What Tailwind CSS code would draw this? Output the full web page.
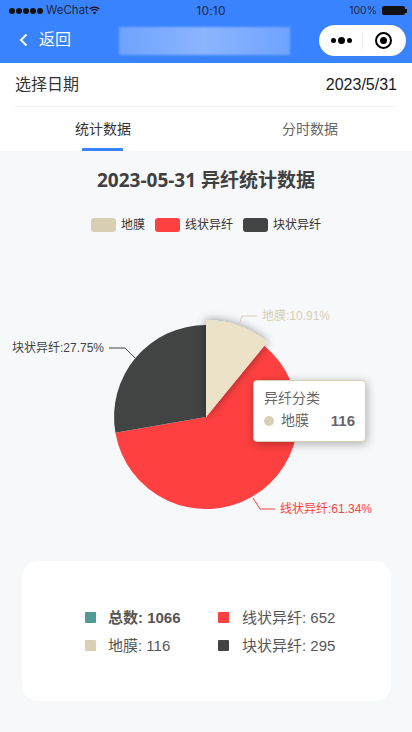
<!DOCTYPE html>
<html><head><meta charset="utf-8">
<script src="https://cdn.jsdelivr.net/npm/@tailwindcss/browser@4"></script>
</head>
<body class="bg-[#f7f8fa]">
<div class="w-[412px] h-[732px] overflow-hidden relative bg-[#f7f8fa] font-['Liberation_Sans','Noto_Sans_CJK_SC',sans-serif]">
  <header class="h-[63px] bg-[#3a83ff] relative">
    <div class="h-[21px] flex items-center justify-between pl-[9px] pr-[5px] text-[#1f2a3f] text-[12px]">
      <div class="flex items-center w-[100px]">
        <div class="flex gap-[1px] mr-[3px]">
          <i class="block size-[6px] rounded-full bg-[#111]"></i><i class="block size-[6px] rounded-full bg-[#111]"></i><i class="block size-[6px] rounded-full bg-[#111]"></i><i class="block size-[6px] rounded-full bg-[#111]"></i><i class="block size-[6px] rounded-full bg-[#111]"></i>
        </div>
        <span class="font-['Inter','Noto_Sans',sans-serif] text-[11.5px]">WeChat</span>
        <svg class="w-[11px] h-[9px]" viewBox="0 0 11 9" fill="none" stroke="#111" stroke-width="1.3"><path d="M.7 3a7 7 0 0 1 9.6 0M2.4 4.9a4.5 4.5 0 0 1 6.2 0"/><path d="M5.5 8.6 3.9 6.7a2.2 2.2 0 0 1 3.2 0z" fill="#111" stroke="none"/></svg>
      </div>
      <span class="font-['Inter','Noto_Sans',sans-serif] text-[12px] tracking-[.2px] ml-[6px]">10:10</span>
      <div class="flex items-center w-[100px] justify-end">
        <span class="text-[10.5px] mr-[5px] font-['Inter','Noto_Sans',sans-serif]">100%</span>
        <div class="w-[23px] h-[9px] bg-[#111] rounded-[2px]"></div><div class="w-[1.5px] h-[4px] bg-[#111] ml-[.5px]"></div>
      </div>
    </div>
    <div class="h-[42px] flex items-center justify-between pl-[19px] pr-[6px]">
      <div class="flex items-center gap-[11px] text-white text-[16px] mt-[-4px]">
        <svg class="w-[9px] h-[14px]" viewBox="0 0 9 14" fill="none" stroke="#fff" stroke-width="2"><path d="M7.5 1.500 2 7l5.500 5.500"/></svg>
        <span>返回</span>
      </div>
      <div class="absolute left-[119px] top-[27px] w-[171px] h-[28px] blur-[1px] bg-linear-to-r from-[#6fa3ff] via-[#8cb4ff] to-[#6fa3ff]"></div>
      <div class="w-[87px] h-[31px] mt-[-3px] rounded-full bg-white flex items-center shadow-[0_0_1px_#0004]">
        <div class="w-[43px] flex items-center justify-center gap-[2px] pl-[1px]">
          <i class="block size-[5px] rounded-full bg-black"></i><i class="block size-[7px] rounded-full bg-black"></i><i class="block size-[5px] rounded-full bg-black"></i>
        </div>
        <div class="w-px h-[18px] bg-[#f0f0f0]"></div>
        <div class="flex-1 flex justify-center pr-[3px]">
          <div class="size-[17px] rounded-full border-2 border-black flex items-center justify-center"><i class="block size-[7px] rounded-full bg-black"></i></div>
        </div>
      </div>
    </div>
  </header>

  <section class="bg-white h-[88px]">
    <div class="mx-[15px] h-[44px] border-b border-[#f1f1f1] flex items-center justify-between text-[16px]">
      <span class="text-[#333]">选择日期</span>
      <span class="text-[#1a1a1a]">2023/5/31</span>
    </div>
    <div class="grid grid-cols-2 h-[44px] text-[14px] text-center">
      <div class="relative leading-[44px] text-[#333]">
        <span>统计数据</span>
        <div class="absolute left-[82px] bottom-0 w-[41px] h-[3px] bg-[#3a83ff] rounded-t-[1px]"></div>
      </div>
      <div class="leading-[44px] text-[#666]"><span class="relative left-[1px]">分时数据</span></div>
    </div>
  </section>

  <h1 class="mt-[16px] text-center text-[19px] leading-[26px] font-bold text-[#404040] font-['Open_Sans','Noto_Sans_CJK_SC',sans-serif]">2023-05-31 异纤统计数据</h1>

  <div class="mt-[24px] flex justify-center items-center text-[12px] text-[#333] h-[16px]">
    <i class="block w-[25px] h-[14px] rounded-[3px] bg-[#d8cfb4] mr-[5px]"></i><span>地膜</span>
    <i class="block w-[25px] h-[14px] rounded-[3px] bg-[#ff4040] ml-[10px] mr-[5px]"></i><span>线状异纤</span>
    <i class="block w-[25px] h-[14px] rounded-[3px] bg-[#424444] ml-[10px] mr-[5px]"></i><span>块状异纤</span>
  </div>

  <svg class="absolute left-0 top-[300px]" width="412" height="230" viewBox="0 300 412 230" style="font-size:12px">
    <defs><filter id="s" x="-40%" y="-40%" width="180%" height="180%"><feDropShadow dx="0" dy="0" stdDeviation="5" flood-color="#000" flood-opacity=".45"/></filter></defs>
    <path d="M206 417 L264.200 345.800 A92 92 0 1 1 115.400 432.800 Z" fill="#ff4040"/>
    <path d="M206 417 L115.400 432.800 A92 92 0 0 1 206 325 Z" fill="#424444"/>
    <path d="M206 417 L206 320 A97 97 0 0 1 267.400 342 Z" fill="#ece2c7" filter="url(#s)"/>
    <path d="M239 325 L242 316 H257" fill="none" stroke="#d8cfb4"/>
    <path d="M135 358 L125 348 H109" fill="none" stroke="#424444"/>
    <path d="M253 498 L260 509 H275" fill="none" stroke="#ff4040"/>
    <text x="262" y="320" fill="#d8cfb4">地膜:10.91%</text>
    <text x="12" y="352" fill="#424444">块状异纤:27.75%</text>
    <text x="280" y="513" fill="#ff4040">线状异纤:61.34%</text>
  </svg>

  <div class="absolute left-[253px] top-[380px] w-[113px] h-[62px] bg-white rounded-[4px] border border-[#d8cfb4] shadow-[1px_2px_10px_rgba(0,0,0,.3)] pl-[10px] pt-[7px] text-[#666] text-[14px] leading-[21px]">
    <div>异纤分类</div>
    <div class="flex items-center mt-[1px]">
      <i class="block size-[10px] rounded-full bg-[#d8cfb4] mr-[7px]"></i><span>地膜</span><b class="ml-auto mr-[10px] text-[15px]">116</b>
    </div>
  </div>

  <div class="absolute left-[22px] top-[561px] w-[369px] h-[140px] bg-white rounded-[16px] grid grid-cols-[133px_auto] content-center justify-start pl-[63px] gap-y-[7px] text-[15px] leading-[21px] text-[#555]">
    <div class="flex items-center font-bold"><i class="block size-[11px] bg-[#529a96] mr-[12px] rounded-[1px]"></i>总数: 1066</div>
    <div class="flex items-center"><i class="block size-[11px] bg-[#ff4040] mr-[13px] rounded-[1px]"></i>线状异纤: 652</div>
    <div class="flex items-center"><i class="block size-[11px] bg-[#d8cfb4] mr-[12px] rounded-[1px]"></i>地膜: 116</div>
    <div class="flex items-center"><i class="block size-[11px] bg-[#424444] mr-[13px] rounded-[1px]"></i>块状异纤: 295</div>
  </div>
</div>
</body></html>
